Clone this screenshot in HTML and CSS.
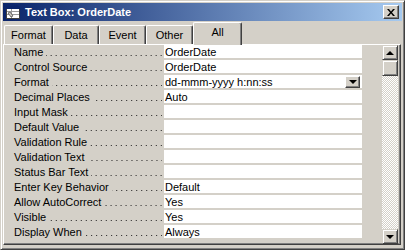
FILE: index.html
```html
<!DOCTYPE html>
<html>
<head>
<meta charset="utf-8">
<link rel="stylesheet" href="styles.css">
</head>
<body>
<div class="window">
  <div class="titlebar">
    <svg class="ticon" width="16" height="16" viewBox="0 0 16 16">
      <rect x="1.5" y="3.5" width="13" height="11" fill="#fff" stroke="#404040"/>
      <path d="M1 3 L12 1 L15 3 Z" fill="#0a246a"/>
      <rect x="1" y="3" width="14" height="2" fill="#0a246a"/>
      <line x1="2" y1="7.5" x2="14" y2="7.5" stroke="#9a9a9a"/>
      <line x1="2" y1="10.5" x2="14" y2="10.5" stroke="#9a9a9a"/>
      <line x1="6.5" y1="5" x2="6.5" y2="14" stroke="#9a9a9a"/>
      <path d="M3 9 L5 8 L8 12 L6 13 Z" fill="#d4d0c8" stroke="#404040" stroke-width="0.7"/>
    </svg>
    <span class="title">Text Box: OrderDate</span>
    <div class="close">
      <svg width="8" height="7" viewBox="0 0 8 7"><path d="M0 0h2l2 2.5 2-2.5h2l-3 3.5 3 3.5h-2l-2-2.5-2 2.5h-2l3-3.5z" fill="#000"/></svg>
    </div>
  </div>
  <div class="tabs">
    <div class="tab w49">Format</div>
    <div class="tab w46">Data</div>
    <div class="tab w47">Event</div>
    <div class="tab w47">Other</div>
    <div class="tab sel">All</div>
  </div>
  <div class="panel">
    <div class="list">
      <div class="row"><div class="label"><span>Name</span><span class="dots"></span></div><div class="value">OrderDate</div></div>
      <div class="row"><div class="label"><span>Control Source</span><span class="dots"></span></div><div class="value">OrderDate</div></div>
      <div class="row"><div class="label"><span>Format</span><span class="dots"></span></div><div class="value"><span class="vtext">dd-mmm-yyyy h:nn:ss</span><div class="drop"><span class="arrow down"></span></div></div></div>
      <div class="row"><div class="label"><span>Decimal Places</span><span class="dots"></span></div><div class="value">Auto</div></div>
      <div class="row"><div class="label"><span>Input Mask</span><span class="dots"></span></div><div class="value"></div></div>
      <div class="row"><div class="label"><span>Default Value</span><span class="dots"></span></div><div class="value"></div></div>
      <div class="row"><div class="label"><span>Validation Rule</span><span class="dots"></span></div><div class="value"></div></div>
      <div class="row"><div class="label"><span>Validation Text</span><span class="dots"></span></div><div class="value"></div></div>
      <div class="row"><div class="label"><span>Status Bar Text</span><span class="dots"></span></div><div class="value"></div></div>
      <div class="row"><div class="label"><span>Enter Key Behavior</span><span class="dots"></span></div><div class="value">Default</div></div>
      <div class="row"><div class="label"><span>Allow AutoCorrect</span><span class="dots"></span></div><div class="value">Yes</div></div>
      <div class="row"><div class="label"><span>Visible</span><span class="dots"></span></div><div class="value">Yes</div></div>
      <div class="row"><div class="label"><span>Display When</span><span class="dots"></span></div><div class="value">Always</div></div>
    </div>
    <div class="scroll">
      <div class="sbtn"><span class="arrow up"></span></div>
      <div class="thumb"></div>
      <div class="track"></div>
      <div class="sbtn"><span class="arrow down"></span></div>
    </div>
  </div>
</div>
</body>
</html>
```

FILE: styles.css
```css
html, body {
  margin: 0;
  padding: 0;
}
body {
  width: 405px;
  height: 250px;
  overflow: hidden;
  background: #d4d0c8;
  font-family: "Liberation Sans", Arial, sans-serif;
  font-size: 11px;
  color: #000;
}
.window {
  box-sizing: border-box;
  width: 405px;
  height: 250px;
  border: 1px solid;
  border-color: #d4d0c8 #404040 #404040 #d4d0c8;
  box-shadow: inset 1px 1px #fff, inset -1px -1px #808080;
  padding: 2px;
  display: flex;
  flex-direction: column;
}
.titlebar {
  height: 18px;
  flex: none;
  background: linear-gradient(90deg, #0a246a, #a6caf0);
  display: flex;
  align-items: center;
  padding-left: 2px;
}
.ticon {
  flex: none;
}
.title {
  margin-left: 4px;
  color: #fff;
  font-weight: bold;
  font-size: 11px;
  flex: 1;
  white-space: nowrap;
}
.close {
  box-sizing: border-box;
  width: 16px;
  height: 14px;
  margin-right: 3px;
  background: #d4d0c8;
  border: 1px solid;
  border-color: #fff #404040 #404040 #fff;
  box-shadow: inset -1px -1px #808080;
  display: flex;
  align-items: center;
  justify-content: center;
  padding-right: 1px;
}
.tabs {
  height: 23px;
  flex: none;
  display: flex;
  align-items: flex-end;
  padding-left: 1px;
}
.tab {
  box-sizing: border-box;
  height: 19px;
  border-top: 1px solid #fff;
  border-left: 1px solid #fff;
  border-right: 1px solid #404040;
  box-shadow: inset -1px 0 #808080;
  border-radius: 2px 2px 0 0;
  display: flex;
  align-items: center;
  justify-content: center;
  padding-bottom: 1px;
  white-space: nowrap;
}
.w49 { width: 49px; }
.w46 { width: 46px; }
.w47 { width: 47px; }
.tab.sel {
  width: 49px;
  height: 23px;
  margin-bottom: -1px;
  position: relative;
  z-index: 1;
  background: #d4d0c8;
  padding-bottom: 4px;
}
.panel {
  box-sizing: border-box;
  height: 201px;
  margin-right: 1px;
  flex: none;
  border: 1px solid;
  border-color: #fff #404040 #404040 #fff;
  box-shadow: inset -1px -1px #808080;
  display: flex;
}
.list {
  flex: 1;
  display: flex;
  flex-direction: column;
}
.row {
  height: 15px;
  display: flex;
}
.label {
  box-sizing: border-box;
  width: 160px;
  padding-left: 10px;
  padding-right: 2px;
  display: flex;
  white-space: nowrap;
  line-height: 14px;
}
.dots {
  flex: 1;
  margin-left: 3px;
  background: linear-gradient(90deg, #222 1px, transparent 1px) right 1px top 10px / 5px 1px repeat-x;
}
.value {
  box-sizing: border-box;
  width: 198px;
  height: 15px;
  background: #fff;
  border-bottom: 2px solid #d4d0c8;
  padding-left: 1px;
  line-height: 14px;
  display: flex;
  white-space: nowrap;
}
.vtext {
  flex: 1;
}
.drop {
  box-sizing: border-box;
  width: 15px;
  height: 12px;
  margin: 1px 2px 0 0;
  background: #d4d0c8;
  border: 1px solid;
  border-color: #fff #404040 #404040 #fff;
  box-shadow: inset -1px -1px #808080;
  display: flex;
  align-items: center;
  justify-content: center;
}
.scroll {
  width: 16px;
  margin-right: 2px;
  margin-left: 1px;
  display: flex;
  flex-direction: column;
}
.sbtn, .thumb {
  box-sizing: border-box;
  width: 16px;
  height: 15px;
  flex: none;
  background: #d4d0c8;
  border: 1px solid;
  border-color: #d4d0c8 #404040 #404040 #d4d0c8;
  box-shadow: inset 1px 1px #fff, inset -1px -1px #808080;
  display: flex;
  align-items: center;
  justify-content: center;
}
.thumb {
  height: 16px;
}
.track {
  flex: 1;
  background: repeating-conic-gradient(#d4d0c8 0 25%, #fff 0 50%) 0 0 / 2px 2px;
}
.arrow {
  width: 0;
  height: 0;
  border-left: 4px solid transparent;
  border-right: 4px solid transparent;
}
.arrow.up {
  border-bottom: 4px solid #000;
}
.arrow.down {
  border-top: 4px solid #000;
}
```
